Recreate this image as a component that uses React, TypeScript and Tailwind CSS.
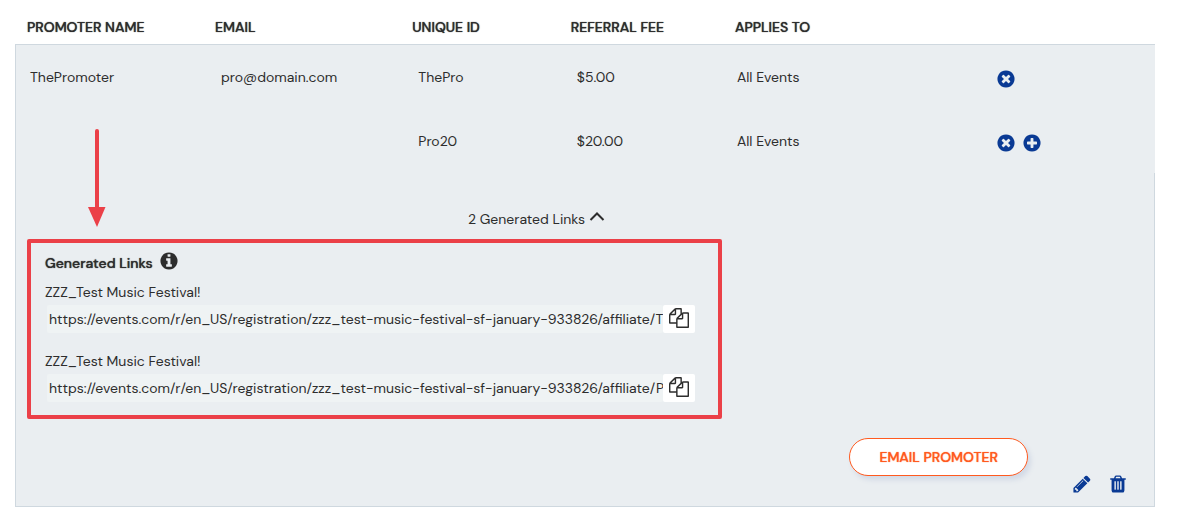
import { useState } from 'react';

const CIRCLE =
  'M1664 896q0 209-103 385.5t-279.5 279.5-385.5 103-385.5-103-279.5-279.5-103-385.5 103-385.5 279.5-279.5 385.5-103 385.5 103 279.5 279.5 103 385.5z';

const ICONS = {
  remove:
    'M1277 1122q0-26-19-45l-181-181 181-181q19-19 19-45 0-27-19-46l-90-90q-19-19-46-19-26 0-45 19l-181 181-181-181q-19-19-45-19-27 0-46 19l-90 90q-19 19-19 46 0 26 19 45l181 181-181 181q-19 19-19 45 0 27 19 46l90 90q19 19 46 19 26 0 45-19l181-181 181 181q19 19 45 19 27 0 46-19l90-90q19-19 19-46z' + CIRCLE,
  add:
    'M1344 960v-128q0-26-19-45t-45-19h-256v-256q0-26-19-45t-45-19h-128q-26 0-45 19t-19 45v256h-256q-26 0-45 19t-19 45v128q0 26 19 45t45 19h256v256q0 26 19 45t45 19h128q26 0 45-19t19-45v-256h256q26 0 45-19t19-45z' + CIRCLE,
  info:
    'M1152 1376v-160q0-14-9-23t-23-9h-96v-512q0-14-9-23t-23-9h-320q-14 0-23 9t-9 23v160q0 14 9 23t23 9h96v320h-96q-14 0-23 9t-9 23v160q0 14 9 23t23 9h448q14 0 23-9t9-23zm-128-896v-160q0-14-9-23t-23-9h-192q-14 0-23 9t-9 23v160q0 14 9 23t23 9h192q14 0 23-9t9-23z' + CIRCLE,
  copy:
    'M1696 384q40 0 68 28t28 68v1216q0 40-28 68t-68 28h-960q-40 0-68-28t-28-68v-288h-544q-40 0-68-28t-28-68v-672q0-40 20-88t48-76l408-408q28-28 76-48t88-20h416q40 0 68 28t28 68v328q68-40 128-40h416zm-544 213l-299 299h299v-299zm-640-384l-299 299h299v-299zm196 647l316-316v-416h-384v416q0 40-28 68t-68 28h-416v640h512v-256q0-40 20-88t48-76zm956 804v-1152h-384v416q0 40-28 68t-68 28h-416v640h896z',
  edit:
    'M491 1536l91-91-235-235-91 91v107h128v128h107zm523-928q0-22-22-22-10 0-17 7l-542 542q-7 7-7 17 0 22 22 22 10 0 17-7l542-542q7-7 7-17zm-54-192l416 416-832 832h-416v-416zm683 96q0 53-37 90l-166 166-416-416 166-165q36-38 90-38 53 0 91 38l235 234q37 39 37 91z',
  trash:
    'M704 1376v-704q0-14-9-23t-23-9h-64q-14 0-23 9t-9 23v704q0 14 9 23t23 9h64q14 0 23-9t9-23zm256 0v-704q0-14-9-23t-23-9h-64q-14 0-23 9t-9 23v704q0 14 9 23t23 9h64q14 0 23-9t9-23zm256 0v-704q0-14-9-23t-23-9h-64q-14 0-23 9t-9 23v704q0 14 9 23t23 9h64q14 0 23-9t9-23zm-544-992h448l-48-117q-7-9-17-11h-317q-10 2-17 11zm928 32v64q0 14-9 23t-23 9h-96v948q0 83-47 143.5t-113 60.5h-832q-66 0-113-58.5t-47-141.5v-952h-96q-14 0-23-9t-9-23v-64q0-14 9-23t23-9h309l70-167q15-37 54-63t79-26h320q40 0 79 26t54 63l70 167h309q14 0 23 9t9 23z',
};

function Icon({ name }: { name: keyof typeof ICONS }) {
  return (
    <svg className="w-5 h-5 shrink-0" viewBox="0 0 1792 1792" fill="currentColor" fillRule="evenodd" aria-hidden="true">
      <path d={ICONS[name]} />
    </svg>
  );
}

const BASE_URL = 'https://events.com/r/en_US/registration/zzz_test-music-festival-sf-january-933826/affiliate/';

const codes = [
  { id: 'ThePro', fee: '$5.00', appliesTo: 'All Events' },
  { id: 'Pro20', fee: '$20.00', appliesTo: 'All Events' },
];

const links = [
  { event: 'ZZZ_Test Music Festival!', url: BASE_URL + 'T' },
  { event: 'ZZZ_Test Music Festival!', url: BASE_URL + 'P' },
];

const headers = ['PROMOTER NAME', 'EMAIL', 'UNIQUE ID', 'REFERRAL FEE', 'APPLIES TO', '', ''];

function LinkField({ id, event, url }: { id: string; event: string; url: string }) {
  return (
    <div>
      <label htmlFor={id} className="block leading-5">{event}</label>
      <div className="flex mt-[3px] ml-0.5">
        <input
          id={id}
          readOnly
          value={url}
          className="flex-1 min-w-0 h-7 pl-0.5 bg-[#eff3f4] rounded-xs outline-none"
        />
        <button
          aria-label="Copy link"
          onClick={() => navigator.clipboard?.writeText(url)}
          className="w-8 h-7 pb-0.5 flex items-center justify-center bg-white rounded-xs"
        >
          <Icon name="copy" />
        </button>
      </div>
    </div>
  );
}

export default function App() {
  const [open, setOpen] = useState(true);

  return (
    <div className="relative pl-[15px] pr-[37px] bg-white text-[#2d2d2d] text-[14px] font-['DM_Sans',Inter,sans-serif]">
      <table className="w-full table-fixed border-separate border-spacing-0">
        <colgroup>
          <col className="w-[16.5%]" />
          <col className="w-[17.3%]" />
          <col className="w-[13.9%]" />
          <col className="w-[14.4%]" />
          <col className="w-[22.4%]" />
          <col className="w-[6.9%]" />
          <col className="w-[8.6%]" />
        </colgroup>
        <thead>
          <tr>
            {headers.map((h, i) => (
              <th key={i} className="h-[45px] pl-3 pt-2.5 text-left font-medium [text-shadow:0_0_1px_currentColor] leading-5 whitespace-nowrap border-b border-[#cfd8df]">
                {h}
              </th>
            ))}
          </tr>
        </thead>
        <tbody className="bg-[#eaeef1]">
          {codes.map((code, i) => (
            <tr key={code.id} className="h-16">
              <td className="pl-3.5 border-l border-[#cfd8df]">{i === 0 && 'ThePromoter'}</td>
              <td className="pl-[18px]">{i === 0 && 'pro@domain.com'}</td>
              <td className="pl-[18px]">{code.id}</td>
              <td className="pl-[18px]">{code.fee}</td>
              <td className="pl-3.5">{code.appliesTo}</td>
              <td className="pl-[18px] pt-1">
                <div className="flex gap-1.5 text-[#0a3a94]">
                  <button aria-label={`Remove ${code.id}`}><Icon name="remove" /></button>
                  {i === codes.length - 1 && <button aria-label="Add code"><Icon name="add" /></button>}
                </div>
              </td>
              <td />
            </tr>
          ))}
          <tr>
            <td colSpan={6} className="pt-[34px] pb-[30px] px-[11px] border-l border-b border-[#cfd8df]">
              <button
                onClick={() => setOpen(!open)}
                aria-expanded={open}
                className="flex items-center gap-1 h-6 mb-2 mx-auto"
              >
                2 Generated Links
                <svg className={open ? 'w-4 h-4 mb-1.5' : 'w-4 h-4 mb-1.5 rotate-180'} viewBox="0 0 16 16" fill="none" stroke="currentColor" strokeWidth="2" aria-hidden="true">
                  <path d="M1.500 12L8 5.500l6.500 6.500" />
                </svg>
              </button>

              {open && (
                <section className="max-w-[695px] border-4 border-[#eb4048] rounded-xs pt-2 pb-[13px] pl-3.5 pr-[23px]">
                  <h2 className="flex items-center gap-1.5 h-6 mb-[7px] font-medium [text-shadow:0_0_1px_currentColor]">
                    Generated Links
                    <span className="pb-1"><Icon name="info" /></span>
                  </h2>
                  <div className="flex flex-col gap-[18px]">
                    {links.map((link, i) => (
                      <LinkField key={i} id={`link-${i}`} event={link.event} url={link.url} />
                    ))}
                  </div>
                </section>
              )}

              <div className="flex justify-end mt-[19px] pr-[18px]">
                <button className="h-[38px] px-[29px] rounded-full border border-[#ff5a1f] bg-white text-[#ff5a1f] font-medium [text-shadow:0_0_1px_currentColor] shadow-[3px_4px_5px_#d3dae6]">
                  EMAIL PROMOTER
                </button>
              </div>
            </td>
            <td className="align-bottom pl-[15px] pb-3 border-r border-b border-[#cfd8df]">
              <div className="flex gap-4 text-[#0a3a94]">
                <button aria-label="Edit promoter"><Icon name="edit" /></button>
                <button aria-label="Delete promoter"><Icon name="trash" /></button>
              </div>
            </td>
          </tr>
        </tbody>
      </table>

      {/* Callout arrow pointing at the generated links */}
      <svg className="absolute left-[88px] top-[128px] w-[18px] h-[99px] text-[#eb4048] pointer-events-none" viewBox="0 0 18 99" aria-hidden="true">
        <path d="M9 3v78" stroke="currentColor" strokeWidth="4" strokeLinecap="round" />
        <path d="M0 79h17.500L9 99z" fill="currentColor" />
      </svg>
    </div>
  );
}
